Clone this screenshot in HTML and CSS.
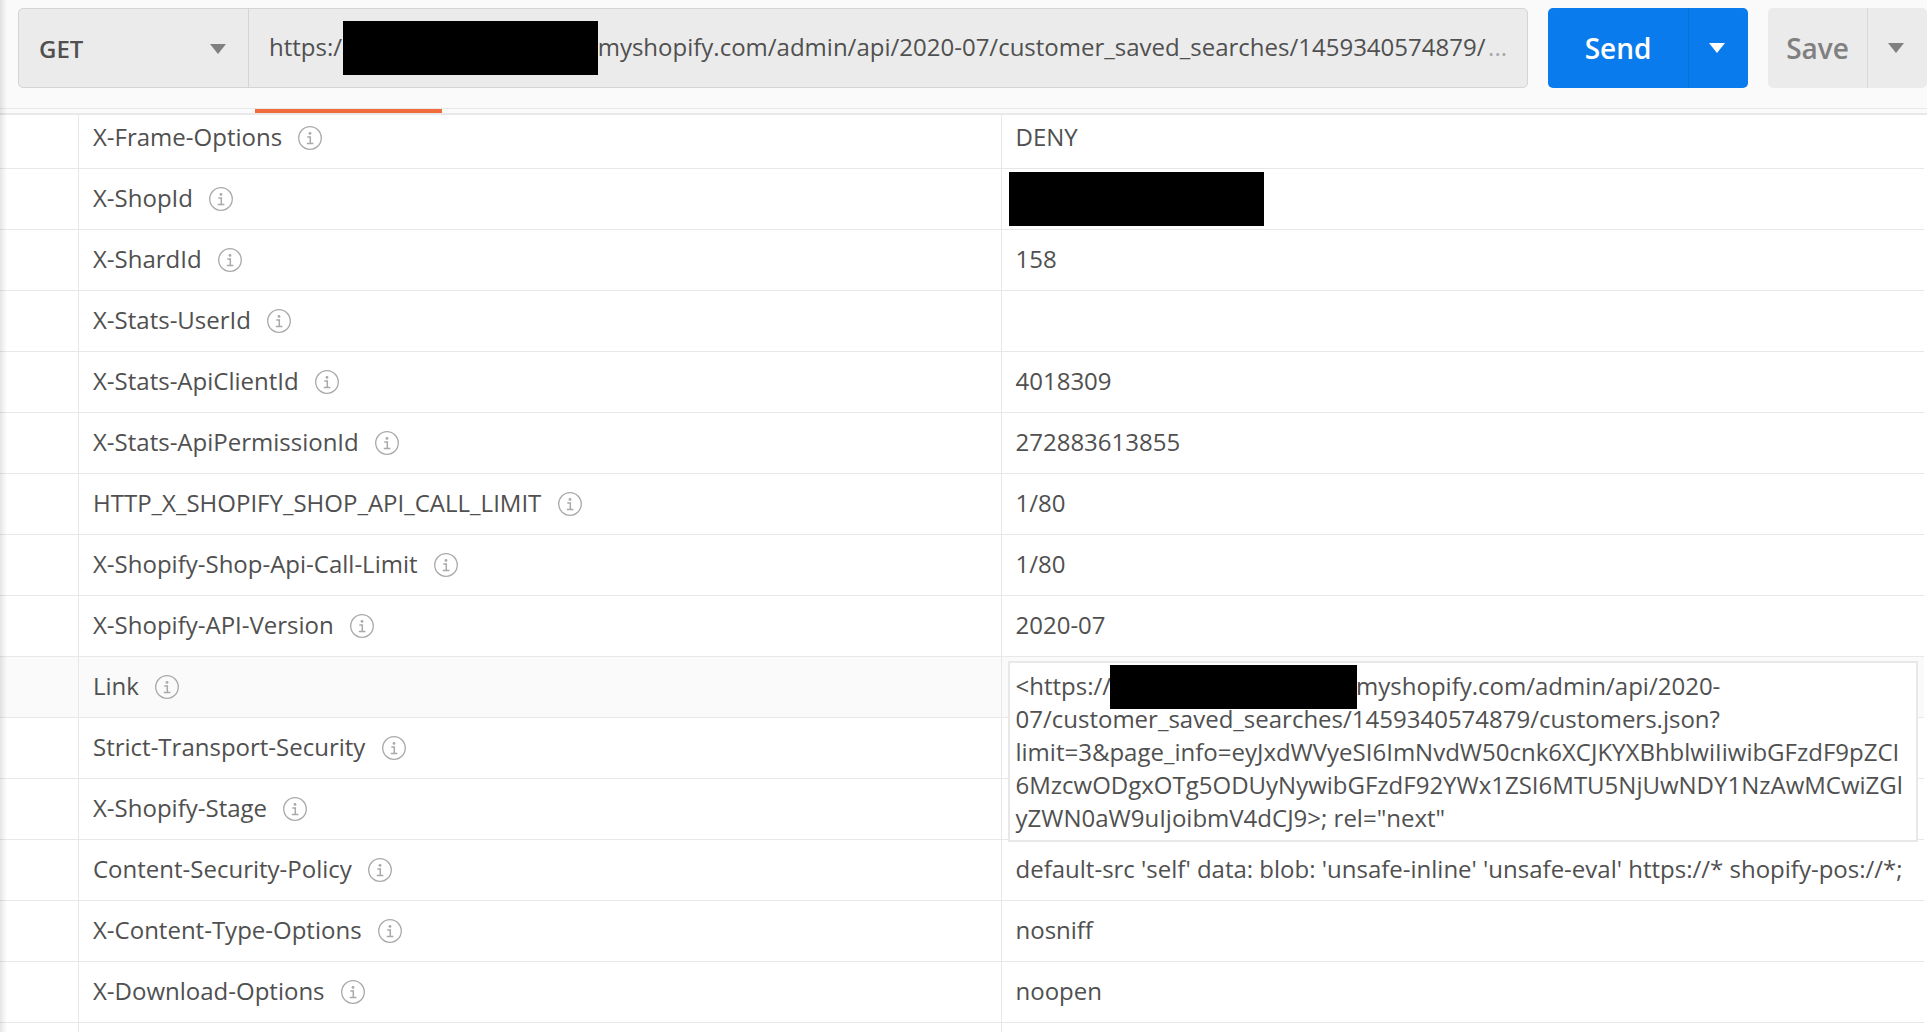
FILE: index.html
```html
<!DOCTYPE html>
<html lang="en">
<head>
  <meta charset="UTF-8" />
  <title>API Request</title>
  <link rel="stylesheet" href="styles.css">
</head>
<body>

  <svg class="sprite" aria-hidden="true">
    <symbol id="info" viewBox="0 0 24 24">
      <circle cx="12" cy="12" r="11.3" fill="none" stroke="#a9a9a9" stroke-width="1.3"/>
      <circle cx="12" cy="7.4" r="1.4" fill="#a9a9a9"/>
      <path d="M9.3 11h3v6.4M8.8 17.4h6.6" fill="none" stroke="#a9a9a9" stroke-width="1.5"/>
    </symbol>
    <symbol id="caret" viewBox="0 0 16 10">
      <path d="M0 0h16L8 10z" fill="currentColor"/>
    </symbol>
  </svg>

  <header class="request">
    <div class="address">
      <div class="method">
        <select aria-label="Method">
          <option>GET</option>
          <option>POST</option>
          <option>PUT</option>
          <option>DELETE</option>
        </select>
        <svg class="caret"><use href="#caret"/></svg>
      </div>
      <div class="url">
        <input class="url-input" type="text" aria-label="Request URL" value="https:/&nbsp;&nbsp;&nbsp;&nbsp;&nbsp;&nbsp;&nbsp;&nbsp;&nbsp;&nbsp;&nbsp;&nbsp;&nbsp;&nbsp;&nbsp;&nbsp;&nbsp;&nbsp;&nbsp;&nbsp;&nbsp;&nbsp;&nbsp;&nbsp;&nbsp;&nbsp;&nbsp;&nbsp;&nbsp;&nbsp;&nbsp;&nbsp;&nbsp;&nbsp;&nbsp;&nbsp;&nbsp;&nbsp;&nbsp;&nbsp;&nbsp;myshopify.com/admin/api/2020-07/customer_saved_searches/1459340574879/">
        <span class="redacted url-redacted"></span>
        <span class="more">...</span>
      </div>
    </div>
    <div class="split send">
      <button class="main-btn">Send</button>
      <button class="menu-btn" aria-label="Send options"><svg class="caret"><use href="#caret"/></svg></button>
    </div>
    <div class="split save">
      <button class="main-btn">Save</button>
      <button class="menu-btn" aria-label="Save options"><svg class="caret"><use href="#caret"/></svg></button>
    </div>
  </header>

  <div class="tabs"><div class="active-tab"></div></div>

  <main>
    <table>
      <tr><td class="check"></td><td class="key">X-Frame-Options <svg class="info"><use href="#info"/></svg></td><td>DENY</td></tr>
      <tr><td class="check"></td><td class="key">X-ShopId <svg class="info"><use href="#info"/></svg></td><td class="hidden-value"><div class="redacted"></div></td></tr>
      <tr><td class="check"></td><td class="key">X-ShardId <svg class="info"><use href="#info"/></svg></td><td>158</td></tr>
      <tr><td class="check"></td><td class="key">X-Stats-UserId <svg class="info"><use href="#info"/></svg></td><td></td></tr>
      <tr><td class="check"></td><td class="key">X-Stats-ApiClientId <svg class="info"><use href="#info"/></svg></td><td>4018309</td></tr>
      <tr><td class="check"></td><td class="key">X-Stats-ApiPermissionId <svg class="info"><use href="#info"/></svg></td><td>272883613855</td></tr>
      <tr><td class="check"></td><td class="key">HTTP_X_SHOPIFY_SHOP_API_CALL_LIMIT <svg class="info"><use href="#info"/></svg></td><td>1/80</td></tr>
      <tr><td class="check"></td><td class="key">X-Shopify-Shop-Api-Call-Limit <svg class="info"><use href="#info"/></svg></td><td>1/80</td></tr>
      <tr><td class="check"></td><td class="key">X-Shopify-API-Version <svg class="info"><use href="#info"/></svg></td><td>2020-07</td></tr>
      <tr class="selected">
        <td class="check"></td>
        <td class="key">Link <svg class="info"><use href="#info"/></svg></td>
        <td class="open">
          <div class="popup">&lt;https://<span class="link-redacted"></span><span>myshopify.com/admin/api/2020-</span>07/customer_saved_searches/1459340574879/customers.json?limit=3&amp;page_info=eyJxdWVyeSI6ImNvdW50cnk6XCJKYXBhblwiIiwibGFzdF9pZCI6MzcwODgxOTg5ODUyNywibGFzdF92YWx1ZSI6MTU5NjUwNDY1NzAwMCwiZGlyZWN0aW9uIjoibmV4dCJ9&gt;; rel="next"</div>
        </td>
      </tr>
      <tr><td class="check"></td><td class="key">Strict-Transport-Security <svg class="info"><use href="#info"/></svg></td><td></td></tr>
      <tr><td class="check"></td><td class="key">X-Shopify-Stage <svg class="info"><use href="#info"/></svg></td><td></td></tr>
      <tr><td class="check"></td><td class="key">Content-Security-Policy <svg class="info"><use href="#info"/></svg></td><td>default-src 'self' data: blob: 'unsafe-inline' 'unsafe-eval' https://* shopify-pos://*;</td></tr>
      <tr><td class="check"></td><td class="key">X-Content-Type-Options <svg class="info"><use href="#info"/></svg></td><td>nosniff</td></tr>
      <tr><td class="check"></td><td class="key">X-Download-Options <svg class="info"><use href="#info"/></svg></td><td>noopen</td></tr>
      <tr><td class="check"></td><td class="key"></td><td></td></tr>
    </table>
  </main>

</body>
</html>
```
FILE: styles.css
```css
* {
  box-sizing: border-box;
}

body {
  font-family: 'Open Sans', sans-serif;
  font-size: 24px;
  line-height: 33px;
  background: #fff;
  color: #505050;
  margin: 0;
  height: 100vh;
  display: flex;
  flex-direction: column;
  overflow: hidden;
}

/* shadow of the sidebar on the left */
body::before {
  content: "";
  position: absolute;
  left: 0;
  top: 0;
  bottom: 0;
  width: 7px;
  z-index: 5;
  background: linear-gradient(to right, rgba(0,0,0,0.1), rgba(0,0,0,0));
}

button, input, select {
  font: inherit;
  color: inherit;
  background: none;
  border: none;
  padding: 0;
  margin: 0;
}

button {
  cursor: pointer;
}

.sprite {
  position: absolute;
  width: 0;
  height: 0;
}

.caret {
  width: 16px;
  height: 10px;
}

.redacted {
  width: 255px;
  height: 54px;
  background: #000;
}

.request {
  display: flex;
  gap: 20px;
  padding: 8px 0 20px 18px;
  background: #fafafa;
  border-bottom: 1px solid #e8e8e8;
}

.address {
  flex: 1;
  min-width: 0;
  display: flex;
  height: 80px;
  background: #ebebeb;
  border: 1px solid #d4d4d4;
  border-radius: 5px;
}

.method {
  position: relative;
  width: 230px;
  display: flex;
  border-right: 1px solid #d4d4d4;
  font-weight: 600;
}

.method select {
  flex: 1;
  padding: 0 20px;
  appearance: none;
  outline: none;
}

.method .caret {
  position: absolute;
  right: 22px;
  top: 35px;
  pointer-events: none;
}

.method .caret, .save .caret {
  color: #808080;
}

.url {
  position: relative;
  flex: 1;
  min-width: 0;
  display: flex;
  align-items: center;
  padding: 0 20px 4px;
}

.url-input {
  flex: 1;
  min-width: 0;
  outline: none;
}

.url-redacted {
  position: absolute;
  left: 94px;
  top: 12px;
}

.more {
  color: #a9a9a9;
}

.split {
  display: flex;
  height: 80px;
  border-radius: 5px;
  overflow: hidden;
  font-size: 28px;
  font-weight: 600;
}

.menu-btn {
  width: 60px;
  padding-right: 4px;
  border-left: 1px solid #d8d8d8;
  display: flex;
  align-items: center;
  justify-content: center;
}

.send {
  background: #097bed;
  color: #fff;
}

.send .main-btn {
  width: 140px;
}

.send .menu-btn {
  border-color: #0a6fd6;
}

.save {
  background: #ebebeb;
  color: #808080;
}

.save .main-btn {
  width: 99px;
}

.tabs {
  height: 6px;
  background: #fafafa;
  border-bottom: 2px solid #e8e8e8;
}

.active-tab {
  width: 187px;
  height: 4px;
  margin-left: 255px;
  background: #f26b3a;
}

main {
  flex: 1;
  min-height: 0;
  overflow: hidden;
  padding-right: 3px;
}

/* the list is scrolled a little under the tabs */
table {
  width: 100%;
  table-layout: fixed;
  border-collapse: separate;
  border-spacing: 0;
  margin-top: -7px;
}

td {
  height: 61px;
  padding: 0 14px 4px;
  border-bottom: 1px solid #e8e8e8;
  white-space: nowrap;
}

.check {
  width: 79px;
  border-right: 1px solid #e8e8e8;
}

.key {
  width: calc(50% - 39px);
  border-right: 1px solid #e8e8e8;
}

.info {
  width: 24px;
  height: 24px;
  margin-left: 10px;
  vertical-align: -4px;
}

.hidden-value {
  padding: 0 7px;
}

.selected td {
  background: #fafafa;
}

.open {
  position: relative;
}

.popup {
  position: absolute;
  top: 4px;
  left: 6px;
  right: 6px;
  z-index: 2;
  padding: 6px;
  background: #fff;
  border: 2px solid #e8e8e8;
  white-space: normal;
  overflow-wrap: break-word;
}

.link-redacted {
  display: inline-block;
  width: 247px;
  height: 44px;
  margin: -12px -1px -8px;
  vertical-align: middle;
  background: #000;
}
```
